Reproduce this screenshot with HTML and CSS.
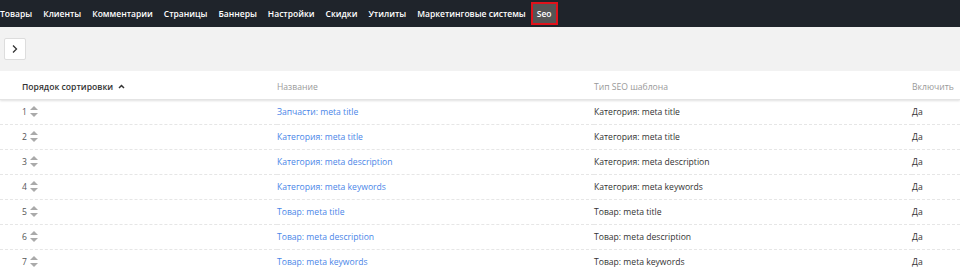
FILE: index.html
```html
<html>
<head>
  <meta name="viewport" content="width=device-width, initial-scale=1">
  <title>Seo</title>
  <link rel="stylesheet" href="styles.css">
</head>
<body>
  <div class="topnav">
    <a href="#">Товары</a>
    <a href="#">Клиенты</a>
    <a href="#">Комментарии</a>
    <a href="#">Страницы</a>
    <a href="#">Баннеры</a>
    <a href="#">Настройки</a>
    <a href="#">Скидки</a>
    <a href="#">Утилиты</a>
    <a href="#">Маркетинговые системы</a>
    <a href="#" class="active">Seo</a>
  </div>

  <div class="toolbar">
    <button class="btn-toggle" type="button">
      <svg width="8" height="10" viewBox="0 0 8 10"><path d="M2 1.5 L5.5 5 L2 8.5" fill="none" stroke="#333" stroke-width="1.3"/></svg>
    </button>
  </div>

  <table class="grid">
    <thead>
      <tr>
        <th class="col-sort sorted">Порядок сортировки <svg class="caret" width="7" height="5" viewBox="0 0 7 5"><path d="M1 4 L3.5 1.5 L6 4" fill="none" stroke="#333" stroke-width="1.5"/></svg></th>
        <th class="col-name">Название</th>
        <th class="col-type">Тип SEO шаблона</th>
        <th class="col-on">Включить</th>
      </tr>
    </thead>
    <tbody>
      <tr><td>1 <span class="sorter"></span></td><td><a href="#">Запчасти: meta title</a></td><td>Категория: meta title</td><td>Да</td></tr>
      <tr><td>2 <span class="sorter"></span></td><td><a href="#">Категория: meta title</a></td><td>Категория: meta title</td><td>Да</td></tr>
      <tr><td>3 <span class="sorter"></span></td><td><a href="#">Категория: meta description</a></td><td>Категория: meta description</td><td>Да</td></tr>
      <tr><td>4 <span class="sorter"></span></td><td><a href="#">Категория: meta keywords</a></td><td>Категория: meta keywords</td><td>Да</td></tr>
      <tr><td>5 <span class="sorter"></span></td><td><a href="#">Товар: meta title</a></td><td>Товар: meta title</td><td>Да</td></tr>
      <tr><td>6 <span class="sorter"></span></td><td><a href="#">Товар: meta description</a></td><td>Товар: meta description</td><td>Да</td></tr>
      <tr><td>7 <span class="sorter"></span></td><td><a href="#">Товар: meta keywords</a></td><td>Товар: meta keywords</td><td>Да</td></tr>
    </tbody>
  </table>
</body>
</html>
```

FILE: styles.css
```css
body {
  margin: 0;
  font-family: "Open Sans", "Liberation Sans", sans-serif;
  font-size: 8.5px;
  color: #333;
  background-color: #fff;
}

/* верхнее меню */
.topnav {
  background-color: #1f242b;
  height: 27px;
  display: flex;
  align-items: center;
  padding-left: 0;
}

.topnav a {
  color: #fff;
  text-decoration: none;
  font-weight: 600;
  font-size: 8.5px;
  margin-right: 11px;
  line-height: 13px;
}

.topnav a.active {
  background-color: #555;
  border: 2px solid #e0121b;
  padding: 3px 4px;
  margin-left: -6px;
}

/* панель */
.toolbar {
  background-color: #f2f2f2;
  height: 44px;
  padding: 11px 0 0 4px;
  box-sizing: border-box;
}

.btn-toggle {
  width: 22px;
  height: 22px;
  background-color: #fff;
  border: 1px solid #ddd;
  border-radius: 2px;
  padding: 0;
  display: flex;
  align-items: center;
  justify-content: center;
}

/* таблица */
.grid {
  width: 100%;
  border-collapse: collapse;
  table-layout: fixed;
  font-family: "Open Sans", "Liberation Sans", sans-serif;
  font-size: 8.6px;
}

.grid thead tr {
  box-shadow: 0 2px 2px rgba(0, 0, 0, 0.12);
}

.grid th {
  text-align: left;
  font-weight: normal;
  color: #999;
  height: 28px;
  padding: 4px 0 0 0;
  border-bottom: 1px solid #e4e4e4;
}

.grid th.sorted {
  color: #333;
  font-weight: 600;
}

.caret {
  margin-left: 3px;
  vertical-align: 1px;
}

.grid th.col-sort { width: 255px; padding-left: 22px; }
.col-name { width: 317px; }
.col-type { width: 318px; }

.grid td {
  height: 25px;
  padding: 0;
  border-bottom: 1px dashed #e6e6e6;
  color: #333;
  white-space: nowrap;
}

.grid td:first-child {
  padding-left: 22px;
  color: #555;
}

.grid a {
  color: #4a86e8;
  text-decoration: none;
}

/* иконка перетаскивания */
.sorter {
  display: inline-block;
  width: 8px;
  height: 11px;
  vertical-align: -2px;
  margin-left: 1px;
  position: relative;
}

.sorter::before,
.sorter::after {
  content: "";
  position: absolute;
  left: 0;
  border-left: 4px solid transparent;
  border-right: 4px solid transparent;
}

.sorter::before {
  top: 0;
  border-bottom: 4px solid #aaa;
}

.sorter::after {
  bottom: 0;
  border-top: 4px solid #aaa;
}
```
